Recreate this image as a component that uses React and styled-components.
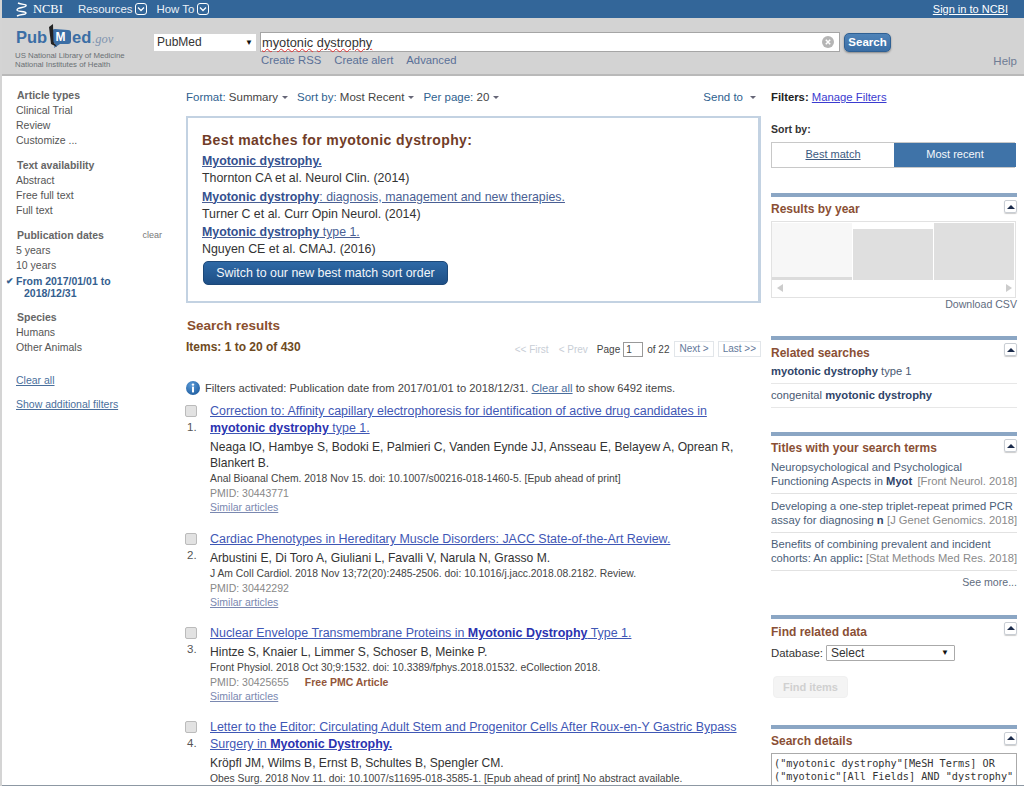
import React from 'react';
import styled, { createGlobalStyle } from 'styled-components';

const Global = createGlobalStyle`
	html, body { margin: 0; padding: 0; background: #fff; }
	body { font-family: "Liberation Sans", Arial, sans-serif; color: #333; }
	* { box-sizing: border-box; }
`;

const Page = styled.div`
	position: relative;
	width: 1024px;
	height: 786px;
	overflow: hidden;
	border-left: 2px solid #d4d4d4;
`;

const BottomEdge = styled.div`
	position: absolute;
	left: 0;
	right: 0;
	bottom: 0;
	height: 1px;
	background: #8d98a3;
`;

/* top bar */
const TopBar = styled.div`
	display: flex;
	align-items: center;
	height: 18px;
	padding: 0 16px 0 13px;
	background: #336699;
	color: #fff;
	font-size: 11.4px;
`;

const NcbiLogo = styled.span`
	display: flex;
	align-items: center;
	gap: 5px;
	width: 63px;
	font-family: "Liberation Serif", serif;
	font-size: 12.5px;
`;

const TopMenu = styled.span`
	display: flex;
	align-items: center;
	gap: 3px;
	margin-right: 9px;
	color: #eaf0f6;
`;

const SignIn = styled.a`
	margin-left: auto;
	font-size: 11px;
	color: #fff;
	text-decoration: underline;
`;

/* masthead */
const Masthead = styled.div`
	display: flex;
	height: 58px;
	padding: 6px 7px 0 13px;
	background: #d3d3d3;
	border-bottom: 2px solid #b9b9b9;
`;

const Logo = styled.div`
	width: 139px;
`;

const LogoNote = styled.div`
	margin-top: 1px;
	font-size: 7.8px;
	line-height: 8.5px;
	color: #6a7074;
`;

const SearchArea = styled.div`
	flex: 1;
	padding-top: 8px;
`;

const SearchRow = styled.div`
	display: flex;
	align-items: center;
`;

const DbSelect = styled.div`
	display: flex;
	align-items: center;
	justify-content: space-between;
	width: 102px;
	height: 17px;
	padding: 0 3px;
	margin-right: 4px;
	background: #fff;
	font-size: 12px;
	color: #333;
`;

const Arrow = styled.span`
	font-size: 8px;
	color: #111;
`;

const SearchBox = styled.div`
	display: flex;
	align-items: center;
	justify-content: space-between;
	width: 580px;
	height: 20px;
	padding: 0 5px 0 1px;
	margin-right: 4px;
	background: #fff;
	border: 1px solid #a5a5a5;
	font-size: 12.8px;
	color: #333;
`;

const Misspelt = styled.span`
	text-decoration: underline wavy #e03030;
	text-decoration-thickness: 1px;
`;

const SearchButton = styled.button`
	width: 47px;
	height: 19px;
	padding: 0;
	border: 1px solid #2f6093;
	border-radius: 5px;
	background: linear-gradient(#4f83b8, #3a6ea5);
	box-shadow: 0 1px 2px #888;
	color: #fff;
	font: bold 11.5px "Liberation Sans", sans-serif;
`;

const SearchLinks = styled.div`
	display: flex;
	gap: 13px;
	margin: 1px 0 0 107px;
	font-size: 11.3px;
	line-height: 14px;
	color: #5a7097;
`;

const Help = styled.div`
	align-self: flex-end;
	padding-bottom: 7px;
	font-size: 11.5px;
	color: #6f7c94;
`;

/* page columns */
const Columns = styled.div`
	display: grid;
	grid-template-columns: 174px 575px 246px;
	column-gap: 10px;
	padding-top: 14px;
`;

/* filters */
const Sidebar = styled.aside`
	margin-top: -3px;
	padding-left: 15px;
	font-size: 10.5px;
	line-height: 15px;
	color: #555;
`;

const FilterGroup = styled.div`
	margin-bottom: 9px;
`;

const FilterHead = styled.div`
	display: flex;
	justify-content: space-between;
	padding-right: 14px;
	font-weight: bold;
	line-height: 16px;
	color: #666;
`;

const ClearMini = styled.span`
	font-size: 9px;
	font-weight: normal;
	color: #777;
`;

const FilterItem = styled.div`
	position: relative;
	margin-left: -1px;
	${(p) => p.$active && `
		font-weight: bold;
		color: #34608f;
		line-height: 12px;
		padding: 2px 0 1px;
	`}
`;

const Wrapped = styled.div`
	margin-left: 8px;
`;

const Check = styled.span`
	position: absolute;
	left: -10px;
	top: 2px;
	font-size: 9px;
	color: #34608f;
`;

const SideLink = styled.a`
	display: block;
	margin-left: -1px;
	margin-top: ${(p) => p.$top || 0}px;
	margin-bottom: 9px;
	color: #4a6f9c;
	text-decoration: underline;
`;

/* centre */
const Content = styled.main`
	min-width: 0;
`;

const Toolbar = styled.div`
	display: flex;
	align-items: center;
	gap: 9px;
	height: 14px;
	font-size: 11.5px;
	color: #2f5f8f;
`;

const ToolValue = styled.span`
	color: #444;
`;

const Caret = styled.span`
	display: inline-block;
	margin-left: ${(p) => p.$gap || 4}px;
	vertical-align: 2px;
	border-left: 3px solid transparent;
	border-right: 3px solid transparent;
	border-top: 3px solid #667;
`;

const SendTo = styled.span`
	margin-left: auto;
	margin-right: 5px;
`;

const MatchBox = styled.section`
	height: 187px;
	margin-top: 12px;
	padding: 14px 14px 0 14px;
	border: 2px solid #c3d2e2;
	border-right-width: 3px;
`;

const MatchTitle = styled.h2`
	margin: 0 0 4px;
	font-size: 14px;
	letter-spacing: 0.4px;
	line-height: 17px;
	color: #713c28;
`;

const MatchLink = styled.a`
	display: block;
	font-size: 12.35px;
	line-height: 17px;
	color: #4a5f94;
	text-decoration: underline;
	b { color: #34508f; }
`;

const MatchCite = styled.div`
	margin-bottom: 2.5px;
	font-size: 12.4px;
	line-height: 16px;
	color: #333;
`;

const SwitchButton = styled.button`
	display: block;
	width: 245px;
	height: 24px;
	margin: 3.5px 0 0 1px;
	padding: 0;
	border: 1px solid #1d4878;
	border-radius: 5px;
	background: linear-gradient(#2e69a6, #1e4f86);
	color: #f3f6fa;
	font: 12.4px "Liberation Sans", sans-serif;
`;

const ResultsHead = styled.h2`
	margin: 14px 0 0 1px;
	font-size: 13.5px;
	line-height: 18px;
	color: #8a4f2e;
`;

const PagerRow = styled.div`
	display: flex;
	align-items: center;
	height: 25px;
	margin: 1px 0 0 0;
`;

const ItemCount = styled.div`
	margin-left: 0;
	margin-top: -3px;
	font-size: 12px;
	font-weight: bold;
	color: #6e4a22;
`;

const Pager = styled.div`
	display: flex;
	align-items: center;
	margin-left: auto;
	padding-top: 1px;
	font-size: 10px;
	color: #444;
`;

const PagerOff = styled.span`
	margin-right: ${(p) => p.$gap}px;
	color: #c8ced6;
`;

const PageInput = styled.span`
	display: block;
	width: 20px;
	height: 15px;
	margin: 0 4px 0 3px;
	padding-left: 2px;
	border: 1px solid #999;
	line-height: 13px;
`;

const PagerButton = styled.span`
	display: block;
	height: 16px;
	margin-left: ${(p) => p.$gap}px;
	padding: 0 4px;
	border: 1px solid #e2e6ea;
	line-height: 14px;
	color: #63799a;
`;

const FilterNote = styled.div`
	display: flex;
	align-items: center;
	gap: 5px;
	margin: 19px 0 7px;
	height: 16px;
	font-size: 11.2px;
	color: #444;
	a { color: #4a6d9c; text-decoration: underline; }
`;

const Result = styled.article`
	display: grid;
	grid-template-columns: 24px 1fr;
	margin-bottom: 16px;
	&:first-of-type { margin-bottom: 17px; }
`;

const Pick = styled.div`
	display: flex;
	flex-direction: column;
	gap: 3px;
	padding-top: 2px;
	font-size: 11.5px;
	line-height: 14px;
	color: #555;
`;

const Tick = styled.span`
	display: block;
	width: 12px;
	height: 12px;
	margin-left: -1px;
	border: 1px solid #bbb;
	border-radius: 2px;
	background: #e2e2e2;
`;

const Num = styled.span`
	margin-left: 1px;
`;

const ResultTitle = styled.a`
	display: block;
	margin-bottom: 2px;
	font-size: 12.45px;
	line-height: 17px;
	color: #3f57b5;
	text-decoration: underline;
	b { color: #2a32b0; }
`;

const Authors = styled.div`
	font-size: 12.1px;
	line-height: 16px;
	color: #333;
`;

const Cite = styled.div`
	font-size: 10.35px;
	line-height: 15px;
	color: #444;
`;

const Pmid = styled.div`
	display: flex;
	gap: 16px;
	font-size: 10.5px;
	line-height: 14px;
	color: #888;
`;

const FreeArticle = styled.span`
	font-weight: bold;
	color: #92563a;
`;

const Similar = styled.a`
	display: block;
	font-size: 10.5px;
	line-height: 14px;
	color: #7a88b0;
	text-decoration: underline;
`;

/* right column */
const Rail = styled.aside`
	font-size: 11.5px;
	color: #444;
`;

const RailFilters = styled.div`
	height: 14px;
	font-size: 11.3px;
	line-height: 14px;
	color: #222;
	a { color: #3b3bd0; text-decoration: underline; }
`;

const RailLabel = styled.div`
	margin-top: 18px;
	font-size: 10.5px;
	line-height: 14px;
	font-weight: bold;
	color: #333;
`;

const SortSwitch = styled.div`
	display: grid;
	grid-template-columns: 122px 122px;
	width: 244px;
	height: 26px;
	margin: 6px 0 25px;
	border: 1px solid #c8c8c8;
	border-right: none;
`;

const SortOption = styled.span`
	font-size: 11px;
	line-height: 23px;
	text-align: center;
	color: ${(p) => (p.$on ? '#f5f8fb' : '#3b5980')};
	background: ${(p) => (p.$on ? '#3f73a8' : '#fff')};
	text-decoration: ${(p) => (p.$on ? 'none' : 'underline')};
`;

const Panel = styled.section`
	margin-bottom: ${(p) => p.$gap}px;
	border-top: 4px solid #8ba6c4;
`;

const PanelHead = styled.div`
	display: flex;
	justify-content: space-between;
	height: ${(p) => p.$height || 24}px;
	padding-top: 3px;
`;

const PanelTitle = styled.h3`
	margin: ${(p) => p.$top || 2}px 0 0;
	font-size: 12px;
	line-height: 14px;
	color: #8a4f35;
`;

const Collapse = styled.span`
	display: flex;
	align-items: center;
	justify-content: center;
	width: 13px;
	height: 13px;
	border: 1px solid #c9ced4;
	border-radius: 2px;
	box-shadow: 0 1px 1px #ccc;
	&::before {
		content: '';
		border-left: 4px solid transparent;
		border-right: 4px solid transparent;
		border-bottom: 4px solid #1c2c4c;
	}
`;

const Chart = styled.div`
	height: 77px;
	margin-right: 1px;
	border: 1px solid #e2e2e2;
	padding: 1px 0 0;
`;

const Bars = styled.div`
	display: grid;
	grid-template-columns: 80px 80px 80px;
	gap: 1px;
	height: 57px;
	align-items: end;
`;

const Bar = styled.div`
	height: ${(p) => p.$height}px;
	background: #dfdfdf;
	${(p) => p.$track && `
		background: linear-gradient(#f7f7f7 54px, #dcdcdc 54px);
	`}
`;

const Scroller = styled.div`
	display: flex;
	align-items: center;
	justify-content: space-between;
	height: 16px;
	padding: 0 3px 0 5px;
`;

const ScrollArrow = styled.span`
	border-top: 4px solid transparent;
	border-bottom: 4px solid transparent;
	${(p) => (p.$right ? 'border-left: 6px solid #ccc;' : 'border-right: 6px solid #ccc;')}
`;

const RightNote = styled.div`
	text-align: right;
	font-size: 10.6px;
	line-height: 13px;
	color: #5f6d80;
	margin-top: ${(p) => p.$top || 0}px;
`;

const RelatedRow = styled.div`
	height: 24px;
	font-size: 11.2px;
	line-height: 22px;
	color: #4a5a72;
	border-bottom: 1px solid #e7e7e7;
	b { color: #2f4468; }
`;

const TitleRow = styled.div`
	margin-bottom: 4.5px;
	padding-bottom: 5px;
	border-bottom: 1px solid #e2e2e2;
	font-size: 11.2px;
	line-height: 14px;
	color: #4a5e78;
	white-space: nowrap;
`;

const TitleEnd = styled.div`
	display: flex;
	justify-content: space-between;
	b { color: #2f4468; }
`;

const Journal = styled.span`
	color: #8a8a8a;
`;

const DbRow = styled.div`
	display: flex;
	align-items: center;
	gap: 3px;
	font-size: 11.4px;
	color: #333;
`;

const DbPicker = styled.div`
	display: flex;
	align-items: center;
	justify-content: space-between;
	width: 129px;
	height: 16px;
	padding: 0 5px 0 4px;
	border: 1px solid #aaa;
	border-radius: 1px;
	font-size: 12px;
`;

const FindButton = styled.button`
	display: block;
	width: 75px;
	height: 22px;
	margin: 15px 0 0 2px;
	padding: 0;
	border: 1px solid #f0f0f0;
	border-radius: 4px;
	background: #f4f4f4;
	color: #d0d0d0;
	font: bold 11px "Liberation Sans", sans-serif;
`;

const QueryBox = styled.div`
	height: 40px;
	padding: 3px 2px;
	border: 1px solid #aaa;
	font-family: "DejaVu Sans Mono", monospace;
	font-size: 10.2px;
	line-height: 13px;
	color: #333;
	white-space: nowrap;
	overflow: hidden;
`;

const filterGroups = [
	{ head: 'Article types', items: ['Clinical Trial', 'Review', 'Customize ...'] },
	{ head: 'Text availability', items: ['Abstract', 'Free full text', 'Full text'] },
];

const results = [
	{
		n: 1,
		title: <>Correction to: Affinity capillary electrophoresis for identification of active drug candidates in <b>myotonic dystrophy</b> type 1.</>,
		authors: 'Neaga IO, Hambye S, Bodoki E, Palmieri C, Vanden Eynde JJ, Ansseau E, Belayew A, Oprean R, Blankert B.',
		cite: 'Anal Bioanal Chem. 2018 Nov 15. doi: 10.1007/s00216-018-1460-5. [Epub ahead of print]',
		pmid: '30443771',
	},
	{
		n: 2,
		title: 'Cardiac Phenotypes in Hereditary Muscle Disorders: JACC State-of-the-Art Review.',
		authors: 'Arbustini E, Di Toro A, Giuliani L, Favalli V, Narula N, Grasso M.',
		cite: 'J Am Coll Cardiol. 2018 Nov 13;72(20):2485-2506. doi: 10.1016/j.jacc.2018.08.2182. Review.',
		pmid: '30442292',
	},
	{
		n: 3,
		title: <>Nuclear Envelope Transmembrane Proteins in <b>Myotonic Dystrophy</b> Type 1.</>,
		authors: 'Hintze S, Knaier L, Limmer S, Schoser B, Meinke P.',
		cite: 'Front Physiol. 2018 Oct 30;9:1532. doi: 10.3389/fphys.2018.01532. eCollection 2018.',
		pmid: '30425655',
		free: true,
	},
	{
		n: 4,
		title: <>Letter to the Editor: Circulating Adult Stem and Progenitor Cells After Roux-en-Y Gastric Bypass Surgery in <b>Myotonic Dystrophy.</b></>,
		authors: 'Kröpfl JM, Wilms B, Ernst B, Schultes B, Spengler CM.',
		cite: 'Obes Surg. 2018 Nov 11. doi: 10.1007/s11695-018-3585-1. [Epub ahead of print] No abstract available.',
	},
];

const titleRows = [
	['Neuropsychological and Psychological', 'Functioning Aspects in ', 'Myot', '[Front Neurol. 2018]'],
	['Developing a one-step triplet-repeat primed PCR', 'assay for diagnosing ', 'n', '[J Genet Genomics. 2018]'],
	['Benefits of combining prevalent and incident', 'cohorts: An applic', ':', '[Stat Methods Med Res. 2018]'],
];

const Helix = () => (
	<svg width="13" height="15" viewBox="0 0 13 15" fill="none" stroke="#fff" strokeWidth="1.4">
		<path d="M3 1 C 7 3, 12 2, 11 4 C 10 6, 2 5, 2 8 C 2 10, 11 9, 11 11 C 11 13, 6 12, 2 14" />
	</svg>
);

const MenuChevron = () => (
	<svg width="12" height="12" viewBox="0 0 12 12" fill="none" stroke="#fff">
		<rect x="0.5" y="0.5" width="11" height="11" rx="2.5" />
		<path d="M3 4.5 L6 7.5 L9 4.5" strokeWidth="1.3" />
	</svg>
);

const PubmedLogo = () => (
	<svg width="112" height="27" viewBox="0 0 112 27" style={{ display: 'block' }}>
		<text x="1" y="19" fontFamily="Liberation Sans" fontWeight="bold" fontSize="16.5" fill="#3b6ea5">Pub</text>
		<path d="M37 8 Q37 5 40 5 L53 6 Q56 6 56 9 L56 17 Q56 20 53 20 L45 20 L39 24 L40 19 Q37 19 37 17 Z" fill="#3b6ea5" />
		<path d="M34 3 L38 0 L38.5 18 L42 23 L36 20 Z" fill="#222" />
		<text x="40.5" y="17" fontFamily="Liberation Sans" fontWeight="bold" fontSize="12" fill="#fff">M</text>
		<text x="57" y="19" fontFamily="Liberation Sans" fontWeight="bold" fontSize="16.5" fill="#3b6ea5">ed</text>
		<text x="77" y="19" fontFamily="Liberation Serif" fontStyle="italic" fontSize="12.5" fill="#8295b0">.gov</text>
	</svg>
);

const ClearIcon = () => (
	<svg width="12" height="12" viewBox="0 0 12 12">
		<circle cx="6" cy="6" r="6" fill="#b5b5b5" />
		<path d="M3.8 3.8 L8.2 8.2 M8.2 3.8 L3.8 8.2" stroke="#fff" strokeWidth="1.5" />
	</svg>
);

const InfoIcon = () => (
	<svg width="14" height="14" viewBox="0 0 14 14">
		<defs>
			<radialGradient id="info" cx="40%" cy="30%" r="80%">
				<stop offset="0" stopColor="#5b9bd8" />
				<stop offset="1" stopColor="#1c5a9c" />
			</radialGradient>
		</defs>
		<circle cx="7" cy="7" r="7" fill="url(#info)" />
		<circle cx="7" cy="3.6" r="1.2" fill="#fff" />
		<rect x="6" y="5.6" width="2" height="5.8" fill="#fff" />
	</svg>
);

export default function App() {
	return (
		<Page>
			<Global />
			<TopBar>
				<NcbiLogo><Helix />NCBI</NcbiLogo>
				<TopMenu>Resources <MenuChevron /></TopMenu>
				<TopMenu>How To <MenuChevron /></TopMenu>
				<SignIn>Sign in to NCBI</SignIn>
			</TopBar>
			<Masthead>
				<Logo>
					<PubmedLogo />
					<LogoNote>US National Library of Medicine<br />National Institutes of Health</LogoNote>
				</Logo>
				<SearchArea>
					<SearchRow>
						<DbSelect>PubMed <Arrow>▼</Arrow></DbSelect>
						<SearchBox>
							<span><Misspelt>myotonic</Misspelt> <Misspelt>dystrophy</Misspelt></span>
							<ClearIcon />
						</SearchBox>
						<SearchButton>Search</SearchButton>
					</SearchRow>
					<SearchLinks>
						<span>Create RSS</span>
						<span>Create alert</span>
						<span>Advanced</span>
					</SearchLinks>
				</SearchArea>
				<Help>Help</Help>
			</Masthead>
			<Columns>
				<Sidebar>
					{filterGroups.map((g) => (
						<FilterGroup key={g.head}>
							<FilterHead>{g.head}</FilterHead>
							{g.items.map((i) => <FilterItem key={i}>{i}</FilterItem>)}
						</FilterGroup>
					))}
					<FilterGroup>
						<FilterHead>Publication dates <ClearMini>clear</ClearMini></FilterHead>
						<FilterItem>5 years</FilterItem>
						<FilterItem>10 years</FilterItem>
						<FilterItem $active>
							<Check>✔</Check>
							From 2017/01/01 to
							<Wrapped>2018/12/31</Wrapped>
						</FilterItem>
					</FilterGroup>
					<FilterGroup>
						<FilterHead>Species</FilterHead>
						<FilterItem>Humans</FilterItem>
						<FilterItem>Other Animals</FilterItem>
					</FilterGroup>
					<SideLink $top={18}>Clear all</SideLink>
					<SideLink>Show additional filters</SideLink>
				</Sidebar>

				<Content>
					<Toolbar>
						<span>Format: <ToolValue>Summary</ToolValue><Caret /></span>
						<span>Sort by: <ToolValue>Most Recent</ToolValue><Caret /></span>
						<span>Per page: <ToolValue>20</ToolValue><Caret /></span>
						<SendTo>Send to<Caret $gap={7} /></SendTo>
					</Toolbar>
					<MatchBox>
						<MatchTitle>Best matches for myotonic dystrophy:</MatchTitle>
						<MatchLink><b>Myotonic dystrophy.</b></MatchLink>
						<MatchCite>Thornton CA et al. Neurol Clin. (2014)</MatchCite>
						<MatchLink><b>Myotonic dystrophy</b>: diagnosis, management and new therapies.</MatchLink>
						<MatchCite>Turner C et al. Curr Opin Neurol. (2014)</MatchCite>
						<MatchLink><b>Myotonic dystrophy</b> type 1.</MatchLink>
						<MatchCite>Nguyen CE et al. CMAJ. (2016)</MatchCite>
						<SwitchButton>Switch to our new best match sort order</SwitchButton>
					</MatchBox>
					<ResultsHead>Search results</ResultsHead>
					<PagerRow>
						<ItemCount>Items: 1 to 20 of 430</ItemCount>
						<Pager>
							<PagerOff $gap={10}>&lt;&lt; First</PagerOff>
							<PagerOff $gap={9}>&lt; Prev</PagerOff>
							<span>Page</span>
							<PageInput>1</PageInput>
							<span>of 22</span>
							<PagerButton $gap={5}>Next &gt;</PagerButton>
							<PagerButton $gap={4}>Last &gt;&gt;</PagerButton>
						</Pager>
					</PagerRow>
					<FilterNote>
						<InfoIcon />
						<span>Filters activated: Publication date from 2017/01/01 to 2018/12/31. <a>Clear all</a> to show 6492 items.</span>
					</FilterNote>
					{results.map((r) => (
						<Result key={r.n}>
							<Pick><Tick /><Num>{r.n}.</Num></Pick>
							<div>
								<ResultTitle>{r.title}</ResultTitle>
								<Authors>{r.authors}</Authors>
								<Cite>{r.cite}</Cite>
								{r.pmid && (
									<>
										<Pmid>
											<span>PMID: {r.pmid}</span>
											{r.free && <FreeArticle>Free PMC Article</FreeArticle>}
										</Pmid>
										<Similar>Similar articles</Similar>
									</>
								)}
							</div>
						</Result>
					))}
				</Content>

				<Rail>
					<RailFilters><b>Filters:</b> <a>Manage Filters</a></RailFilters>
					<RailLabel>Sort by:</RailLabel>
					<SortSwitch>
						<SortOption>Best match</SortOption>
						<SortOption $on>Most recent</SortOption>
					</SortSwitch>

					<Panel $gap={25}>
						<PanelHead>
							<PanelTitle>Results by year</PanelTitle>
							<Collapse />
						</PanelHead>
						<Chart>
							<Bars>
								<Bar $track $height={57} />
								<Bar $height={51} />
								<Bar $height={57} />
							</Bars>
							<Scroller><ScrollArrow /><ScrollArrow $right /></Scroller>
						</Chart>
						<RightNote>Download CSV</RightNote>
					</Panel>

					<Panel $gap={24}>
						<PanelHead $height={20}>
							<PanelTitle $top={3}>Related searches</PanelTitle>
							<Collapse />
						</PanelHead>
						<RelatedRow><b>myotonic dystrophy</b> type 1</RelatedRow>
						<RelatedRow>congenital <b>myotonic dystrophy</b></RelatedRow>
					</Panel>

					<Panel $gap={26}>
						<PanelHead>
							<PanelTitle>Titles with your search terms</PanelTitle>
							<Collapse />
						</PanelHead>
						{titleRows.map(([a, b, c, d]) => (
							<TitleRow key={a}>
								{a}
								<TitleEnd>
									<span>{b}<b>{c}</b></span>
									<Journal>{d}</Journal>
								</TitleEnd>
							</TitleRow>
						))}
						<RightNote $top={1}>See more...</RightNote>
					</Panel>

					<Panel $gap={27}>
						<PanelHead $height={26}>
							<PanelTitle $top={3}>Find related data</PanelTitle>
							<Collapse />
						</PanelHead>
						<DbRow>Database: <DbPicker>Select <Arrow>▼</Arrow></DbPicker></DbRow>
						<FindButton>Find items</FindButton>
					</Panel>

					<Panel $gap={0}>
						<PanelHead>
							<PanelTitle>Search details</PanelTitle>
							<Collapse />
						</PanelHead>
						<QueryBox>("myotonic dystrophy"[MeSH Terms] OR<br />("myotonic"[All Fields] AND "dystrophy"</QueryBox>
					</Panel>
				</Rail>
			</Columns>
			<BottomEdge />
		</Page>
	);
}
